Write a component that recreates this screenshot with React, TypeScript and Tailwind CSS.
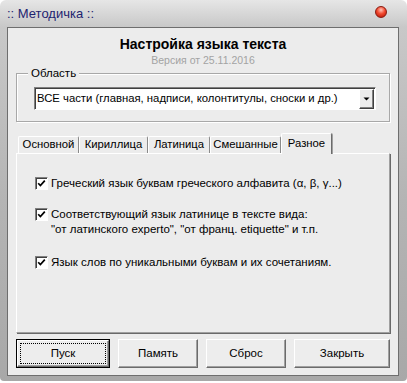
import React from 'react';

const tabs = [
  { label: 'Основной', w: 'w-[61px]' },
  { label: 'Кириллица', w: 'w-[69px]' },
  { label: 'Латиница', w: 'w-[62px]' },
  { label: 'Смешанные', w: 'w-[71px]' },
];

const CheckBox: React.FC = () => (
  <span className="w-[13px] h-[13px] shrink-0 bg-white border border-t-[#808080] border-l-[#808080] border-r-white border-b-white shadow-[inset_1px_1px_0_#404040] flex items-center justify-center">
    <svg width="9" height="9" viewBox="0 0 9 9">
      <path d="M1.2 4.2 L3.4 6.6 L7.8 1.6" stroke="#000" strokeWidth="1.7" fill="none" />
    </svg>
  </span>
);

const Button: React.FC<{ label: string; w: string; primary?: boolean }> = ({ label, w, primary }) => {
  if (primary) {
    return (
      <div className={`${w} h-[29px] border border-black`}>
        <div className="relative h-full border border-t-white border-l-white border-r-[#6b6b6b] border-b-[#6b6b6b] shadow-[inset_-1px_-1px_0_#a0a0a0] bg-[#ededed] flex items-center justify-center">
          {label}
          <span className="absolute inset-[2px] border border-dotted border-black" />
        </div>
      </div>
    );
  }
  return (
    <div className={`${w} h-[29px] border border-t-white border-l-white border-r-[#6b6b6b] border-b-[#6b6b6b] shadow-[inset_-1px_-1px_0_#a0a0a0] bg-[#ededed] flex items-center justify-center`}>
      {label}
    </div>
  );
};

export default function App() {
  return (
    <div className="w-[407px] h-[383px] bg-white font-['Liberation_Sans',Arial,sans-serif] text-[11px] text-black">
      <div className="w-[407px] h-[381px] rounded-t-[6px] rounded-b-[4px] bg-[linear-gradient(#e6e6e6,#c8c8c8_27px,#b4b4b4_200px,#a8a8a8)] flex flex-col pl-[7px] pr-[8px] pb-[5px]">
        <div className="h-[27px] flex items-center justify-between">
          <span className="text-[13px] text-[#1e2470] leading-none -mt-[1px]">:: Методичка ::</span>
          <span className="w-[12px] h-[12px] mr-[12px] -mt-[3px] rounded-full border border-[#8a1a10] bg-[radial-gradient(circle_at_50%_30%,#ffc4b8_0%,#f24a30_45%,#b01000_100%)]" />
        </div>

        <div className="flex-1 border border-[#6e6e6e] bg-[#ececec] flex flex-col px-[8px]">
          <div className="mt-[8px] h-[17px] leading-[17px] text-center font-bold text-[14px]">Настройка языка текста</div>
          <div className="mt-[1px] h-[13px] leading-[13px] text-center text-[10.5px] text-[#a3a3a3]">Версия от 25.11.2016</div>

          <div className="relative mt-[6px] h-[49px] border border-[#a8a8a8] shadow-[inset_1px_1px_0_#fff,1px_1px_0_#fff] pl-[17px] pr-[13px] pt-[13px]">
            <span className="absolute -top-[8px] left-[11px] px-[3px] bg-[#ececec] text-[11.5px] leading-[14px]">Область</span>
            <div className="h-[23px] bg-white border border-t-[#808080] border-l-[#808080] border-r-white border-b-white shadow-[inset_1px_1px_0_#404040] flex items-center pl-[2px] pr-[1px]">
              <span className="flex-1 text-[11.3px] whitespace-nowrap">ВСЕ части (главная, надписи, колонтитулы, сноски и др.)</span>
              <span className="w-[15px] h-[20px] bg-[#ececec] border border-t-white border-l-white border-r-[#404040] border-b-[#404040] shadow-[inset_-1px_-1px_0_#808080] flex items-center justify-center">
                <svg width="7" height="4" viewBox="0 0 7 4">
                  <path d="M0.5 0.5 H6.5 L3.5 3.5 Z" fill="#000" />
                </svg>
              </span>
            </div>
          </div>

          <div className="mt-[11px] flex items-end h-[20px] pl-[2px] relative z-10">
            {tabs.map((t) => (
              <div
                key={t.label}
                className={`${t.w} h-[17px] border-t border-l border-t-white border-l-white border-r border-r-[#8a8a8a] rounded-t-[2px] flex items-center justify-center text-[11.3px] leading-none`}
              >
                {t.label}
              </div>
            ))}
            <div className="w-[51px] h-[21px] -mb-[1px] bg-[#ececec] border-t border-l border-t-white border-l-white border-r border-r-[#6b6b6b] shadow-[1px_0_0_#a0a0a0] rounded-t-[2px] flex justify-center pt-[2px] text-[11.3px] leading-[14px]">
              Разное
            </div>
          </div>

          <div className="h-[180px] border-t border-l border-t-white border-l-white border-r border-b border-r-[#a0a0a0] border-b-[#a0a0a0] shadow-[1px_1px_0_#696969] pl-[18px] pt-[22px] text-[11.5px]">
            <div className="flex items-center gap-[3px] h-[15px]">
              <CheckBox />
              <span>Греческий язык буквам греческого алфавита (α, β, γ...)</span>
            </div>
            <div className="flex items-start gap-[3px] mt-[16px]">
              <span className="h-[15px] flex items-center"><CheckBox /></span>
              <span className="leading-[15px]">
                Соответствующий язык латинице в тексте вида:
                <br />
                "от латинского experto", "от франц. etiquette" и т.п.
              </span>
            </div>
            <div className="flex items-center gap-[3px] h-[15px] mt-[18px]">
              <CheckBox />
              <span>Язык слов по уникальными буквам и их сочетаниям.</span>
            </div>
          </div>

          <div className="mt-[6px] flex text-[11.5px]">
            <Button label="Пуск" w="w-[96px]" primary />
            <div className="ml-[8px]"><Button label="Память" w="w-[80px]" /></div>
            <div className="ml-[8px]"><Button label="Сброс" w="w-[80px]" /></div>
            <div className="ml-[8px]"><Button label="Закрыть" w="w-[96px]" /></div>
          </div>
        </div>
      </div>
    </div>
  );
}
